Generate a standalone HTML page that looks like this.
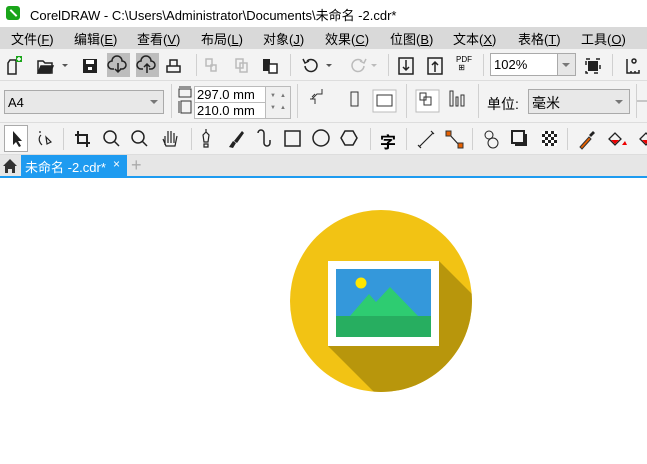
<!DOCTYPE html>
<html><head><meta charset="utf-8"><style>
*{margin:0;padding:0;box-sizing:border-box}
html,body{width:647px;height:464px;overflow:hidden}
body{background:#fff;font-family:"Liberation Sans","Noto Sans CJK SC",sans-serif;position:relative;color:#000}
.a{position:absolute}
.t{font-size:13px;white-space:nowrap}
.sep{position:absolute;width:1px;background:#d0d0d0}
svg{position:absolute;overflow:visible}
</style></head><body>
<div class="a" style="left:0;top:0;width:647px;height:27px;background:#fff"></div>
<div class="a" style="left:6px;top:6px;width:14px;height:14px;border-radius:3px;background:#1aa51a"></div>
<div class="a" style="left:9px;top:12px;width:9px;height:2px;background:#fff;transform:rotate(45deg)"></div>
<div class="a t" style="left:30px;top:5px">CorelDRAW - C:\Users\Administrator\Documents\未命名 -2.cdr*</div>
<div class="a" style="left:0;top:27px;width:647px;height:22px;background:#d9d9d9"></div>
<div class="a t" style="left:11px;top:29px">文件(<u>F</u>)</div>
<div class="a t" style="left:74px;top:29px">编辑(<u>E</u>)</div>
<div class="a t" style="left:137px;top:29px">查看(<u>V</u>)</div>
<div class="a t" style="left:201px;top:29px">布局(<u>L</u>)</div>
<div class="a t" style="left:263px;top:29px">对象(<u>J</u>)</div>
<div class="a t" style="left:325px;top:29px">效果(<u>C</u>)</div>
<div class="a t" style="left:390px;top:29px">位图(<u>B</u>)</div>
<div class="a t" style="left:453px;top:29px">文本(<u>X</u>)</div>
<div class="a t" style="left:518px;top:29px">表格(<u>T</u>)</div>
<div class="a t" style="left:581px;top:29px">工具(<u>O</u>)</div>
<div class="a" style="left:0;top:49px;width:647px;height:106px;background:#f3f3f3"></div>
<div class="a" style="left:0;top:80px;width:647px;height:1px;background:#ddd"></div>
<div class="a" style="left:0;top:122px;width:647px;height:1px;background:#ddd"></div>
<div class="a" style="left:0;top:154px;width:647px;height:1px;background:#ddd"></div>
<svg style="left:0;top:49px" width="647" height="31" fill="none" stroke="#222" stroke-width="1.5">
<path d="M10 11h6v14H8V14z"/><rect x="16" y="7" width="6" height="6" fill="#1aa51a" stroke="none"/><path d="M19 8v4M17 10h4" stroke="#fff"/>
<path d="M38 12h5l2 2h7v10H38z" fill="none"/><path d="M38 24l3-7h12l-3 7z" fill="#222"/>
<path d="M62 15l3 3 3-3z" fill="#555" stroke="none"/>
<rect x="83" y="10" width="14" height="14" fill="#222" stroke="none"/><rect x="86" y="11" width="8" height="4" fill="#fff" stroke="none"/><rect x="88" y="18" width="4" height="3" fill="#fff" stroke="none"/>
<rect x="107" y="4" width="23" height="24" fill="#bdbdbd" stroke="none"/><rect x="136" y="4" width="23" height="24" fill="#bdbdbd" stroke="none"/>
<path d="M114 20h-2a4 4 0 0 1 0-8 5 5 0 0 1 10 0 4 4 0 0 1 0 8h-2M118 14v9M115 20l3 3 3-3"/>
<path d="M143 20h-2a4 4 0 0 1 0-8 5 5 0 0 1 10 0 4 4 0 0 1 0 8h-2M147 24v-9M144 18l3-3 3 3"/>
<path d="M170 17v-6h7v6M167 17h13v6h-13z"/>
<g stroke="#bbb"><path d="M206 10h6v7h-6zM211 16h5v6h-5z"/><path d="M236 10h7v9h-7zM240 14h7v9h-7z"/></g>
<rect x="263" y="10" width="7" height="12" fill="#222" stroke="none"/><path d="M269 15h8v9h-8z" fill="#fff"/>
<path d="M307 12a6 6 0 1 1-2 5M303 10l2 4 4-2"/><path d="M326 15l3 3 3-3z" fill="#555" stroke="none"/>
<g stroke="#bbb"><path d="M362 12a6 6 0 1 0 2 5M366 10l-2 4-4-2"/></g><path d="M371 15l3 3 3-3z" fill="#bbb" stroke="none"/>
<path d="M399 9h14v16h-14zM406 11v10M403 18l3 3 3-3"/><path d="M428 9h14v16h-14zM435 23v-10M432 16l3-3 3 3"/>
<path d="M586 10h14v14h-14z" stroke-dasharray="4 6"/><rect x="588" y="12" width="10" height="10" fill="#222" stroke="none"/>
<path d="M627 10v14h12v-3M631 24v-2M635 24v-2"/><circle cx="634" cy="12" r="2"/>
</svg>
<div class="sep" style="left:196px;top:54px;height:22px"></div>
<div class="sep" style="left:290px;top:54px;height:22px"></div>
<div class="sep" style="left:388px;top:54px;height:22px"></div>
<div class="sep" style="left:483px;top:54px;height:22px"></div>
<div class="sep" style="left:612px;top:54px;height:22px"></div>
<div class="a" style="left:456px;top:56px;font-size:8px;line-height:8px">PDF<br>&nbsp;⊞</div>
<div class="a" style="left:490px;top:53px;width:86px;height:23px;background:#fff;border:1px solid #aaa"></div>
<div class="a" style="left:557px;top:54px;width:18px;height:21px;background:#e6e6e6;border-left:1px solid #aaa"></div>
<div class="a" style="left:562px;top:63px;border:4px solid transparent;border-top:4px solid #777"></div>
<div class="a t" style="left:494px;top:57px">102%</div>
<div class="a" style="left:4px;top:90px;width:160px;height:24px;background:#e8e8e8;border:1px solid #aaa"></div>
<div class="a t" style="left:8px;top:95px">A4</div>
<div class="a" style="left:150px;top:100px;border:4px solid transparent;border-top:4px solid #777"></div>
<div class="sep" style="left:171px;top:84px;height:34px"></div>
<svg style="left:0;top:81px" width="647" height="41" fill="none" stroke="#333" stroke-width="1">
<path d="M179 6h12M179 8h12v8h-12zM179 20v12M181 20h10v12h-10z"/>
<path d="M312 18l5-5h5v-5M310 18h5v5M315 13l-3 3"/>
<path d="M351 11h7v14h-7z"/><rect x="373" y="9" width="23" height="22" fill="#fff" stroke="#bbb"/><path d="M377 14h15v11h-15z"/>
<rect x="416" y="9" width="23" height="22" fill="#fff" stroke="#bbb"/><path d="M420 12h6v7h-6zM424 16h7v8h-7z"/>
<path d="M450 10h3v15h-3zM456 16h2v9h-2zM461 14h3v11h-3z"/>
<path d="M636 20h11" stroke="#999"/>
</svg>
<div class="a" style="left:194px;top:86px;width:72px;height:17px;background:#fff;border:1px solid #bbb"></div>
<div class="a" style="left:194px;top:102px;width:72px;height:17px;background:#fff;border:1px solid #bbb"></div>
<div class="a" style="left:265px;top:86px;width:26px;height:33px;background:#f0f0f0;border:1px solid #bbb"></div>
<div class="a t" style="left:197px;top:87px">297.0 mm</div>
<div class="a t" style="left:197px;top:103px">210.0 mm</div>
<div class="a" style="left:270px;top:93px;font-size:6px;color:#777;letter-spacing:4px">▼▲<br><br>▼▲</div>
<div class="sep" style="left:297px;top:84px;height:34px"></div>
<div class="sep" style="left:406px;top:84px;height:34px"></div>
<div class="sep" style="left:478px;top:84px;height:34px"></div>
<div class="sep" style="left:636px;top:84px;height:34px"></div>
<div class="a" style="left:487px;top:94px;font-size:14px">单位:</div>
<div class="a" style="left:528px;top:89px;width:102px;height:25px;background:#e8e8e8;border:1px solid #aaa"></div>
<div class="a" style="left:532px;top:93px;font-size:14px">毫米</div>
<div class="a" style="left:615px;top:100px;border:4px solid transparent;border-top:4px solid #777"></div>
<div class="a" style="left:4px;top:125px;width:24px;height:27px;background:#fff;border:1px solid #aaa"></div>
<svg style="left:0;top:123px" width="647" height="32" fill="none" stroke="#222" stroke-width="1.5">
<path d="M13 8v14l3-3 3 5 2-1-3-5h4z" fill="#222" stroke="none"/>
<path d="M40 8v2M41 12c-3 3-2 7 1 10M46 14l5 5-4 2z" stroke-width="1.2"/>
<path d="M78 8v12h12M75 12h12v12" stroke-width="2"/>
<circle cx="110" cy="14" r="6"/><path d="M114 18l5 5"/><circle cx="138" cy="14" r="6"/><path d="M142 18l5 5"/>
<path d="M165 22v-9M168 20v-12M171 20v-12M174 20v-10M163 16l3 7h9l2-10" stroke-width="1.2"/>
<path d="M206 6v3M203 12l3-3 3 3-1 7h-4z M204 21h4v3h-4z" stroke-width="1.2"/>
<path d="M229 24l4-6 3 2-3 5zM234 18l8-10 2 2-7 10z" fill="#222" stroke="none"/>
<path d="M258 10a3 3 0 0 1 6 0v10a3 3 0 0 0 6 0v-3"/>
<rect x="285" y="8" width="15" height="15"/><circle cx="321" cy="15" r="8"/><path d="M345 8h8l4 7-4 7h-8l-4-7z"/>
<path d="M419 24l14-14M418 22l3 3M431 8l3 3" stroke-width="1.2"/>
<path d="M449 11l11 12" stroke-width="1.2"/><rect x="446" y="8" width="5" height="5" fill="#e66000" stroke="#333" stroke-width="1"/><rect x="458" y="20" width="5" height="5" fill="#e66000" stroke="#333" stroke-width="1"/>
<circle cx="489" cy="12" r="4" stroke-width="1"/><circle cx="493" cy="20" r="5" stroke-width="1"/>
<path d="M512 8h12v12h-12zM526 11v11h-11" stroke-width="2"/>
<rect x="542" y="8" width="15" height="15" fill="#222" stroke="none"/>
<path d="M542 8h3v3h-3zM548 8h3v3h-3zM554 8h3v3h-3zM545 11h3v3h-3zM551 11h3v3h-3zM542 14h3v3h-3zM548 14h3v3h-3zM554 14h3v3h-3zM545 17h3v3h-3zM551 17h3v3h-3zM542 20h3v3h-3zM548 20h3v3h-3zM554 20h3v3h-3z" fill="#fff" stroke="none"/>
<path d="M580 24l9-10 2 2-9 10z" fill="#e66000" stroke="#333" stroke-width="1"/><path d="M589 12l4-4 2 2-4 4z" fill="#222" stroke="none"/>
<path d="M609 16l6-6 6 6-6 6z" stroke-width="1.3"/><path d="M611 17l8 0-4 4z" fill="#e00" stroke="none"/><path d="M622 22l3-4 2 4z" fill="#e00" stroke="none"/>
<path d="M640 16l6-6 6 6-6 6z" stroke-width="1.3"/><path d="M642 17l8 0-4 4z" fill="#e00" stroke="none"/>
</svg>
<div class="a" style="left:380px;top:129px;font-size:16px;font-weight:bold">字</div>
<div class="sep" style="left:63px;top:128px;height:22px"></div>
<div class="sep" style="left:191px;top:128px;height:22px"></div>
<div class="sep" style="left:370px;top:128px;height:22px"></div>
<div class="sep" style="left:406px;top:128px;height:22px"></div>
<div class="sep" style="left:472px;top:128px;height:22px"></div>
<div class="sep" style="left:567px;top:128px;height:22px"></div>
<div class="a" style="left:0;top:155px;width:647px;height:21px;background:#e6e6e6"></div>
<div class="a" style="left:0;top:176px;width:647px;height:2px;background:#1e9bf0"></div>
<svg style="left:2px;top:158px" width="18" height="16"><path d="M1 8l7-7 7 7h-2v7h-3v-4h-4v4H3V8z" fill="#333"/></svg>
<div class="a" style="left:21px;top:155px;width:106px;height:21px;background:#1e9bf0"></div>
<div class="a t" style="left:25px;top:157px;color:#fff">未命名 -2.cdr*</div>
<div class="a t" style="left:113px;top:157px;color:#fff;font-size:12px">×</div>
<div class="a" style="left:131px;top:155px;font-size:18px;color:#aaa;line-height:21px">+</div>
<svg style="left:0;top:0;overflow:hidden" width="647" height="464">
<defs><clipPath id="c"><circle cx="381" cy="301" r="91"/></clipPath></defs>
<circle cx="381" cy="301" r="91" fill="#f2c314"/>
<polygon clip-path="url(#c)" points="439,261 639,461 528,546 328,346 439,346" fill="#b8960c"/>
<rect x="328" y="261" width="111" height="85" fill="#fff"/>
<rect x="336" y="269" width="95" height="68" fill="#3498db"/>
<polygon points="350,316 369,294 376,302 390,287 418,316" fill="#2ecc71"/>
<rect x="336" y="316" width="95" height="21" fill="#27ae60"/>
<circle cx="361" cy="283" r="5.5" fill="#ffe600"/>
</svg>
</body></html>
